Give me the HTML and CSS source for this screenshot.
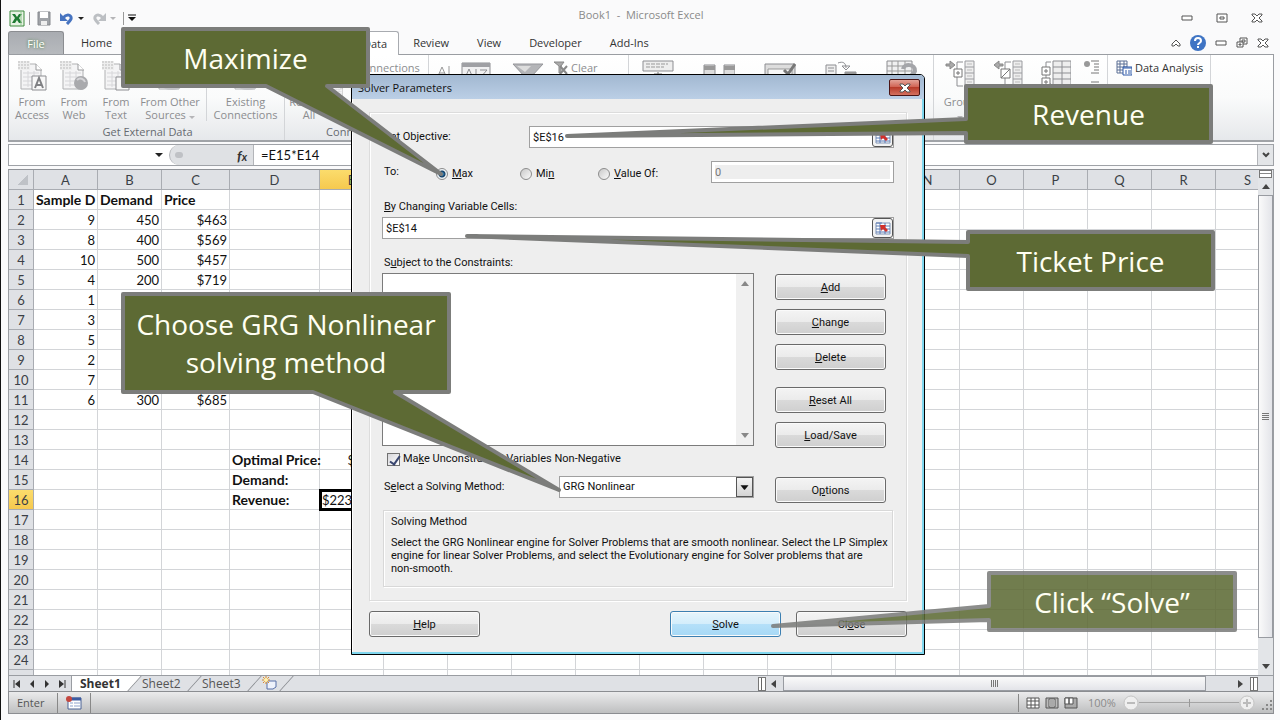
FILE: index.html
```html
<!DOCTYPE html>
<html lang="en">
<head>
  <meta charset="UTF-8" />
  <meta name="viewport" content="width=device-width, initial-scale=1.0"/>
  <title>Book1 - Microsoft Excel</title>
  <link rel="stylesheet" href="styles.css">
</head>
<body>

<svg class="defs" width="0" height="0" aria-hidden="true">
  <symbol id="page" viewBox="0 0 30 32">
    <path d="M4 4h15l5 5v20H4z" fill="#f4f4f5" stroke="#b0b1b3"/>
    <path d="M19 4v6h6" fill="#fff" stroke="#9a9b9d"/>
    <path d="M6 13h16M6 17h16M6 21h16M6 25h16M11 11v16M17 11v16" stroke="#d6d6d9"/>
    <path d="M1 1h12v9H1z" fill="#eee"/>
    <path d="M1 2h12M1 5h12M1 8h12" stroke="#bbb" stroke-dasharray="2 1"/>
  </symbol>
  <symbol id="outline" viewBox="0 0 30 32">
    <path d="M20 1h9v30h-9z" fill="#eee" stroke="#9b9ca0"/>
    <path d="M20 7h9M20 13h9M20 19h9M20 25h9" stroke="#9b9ca0"/>
    <path d="M22 4h5M22 10h5M22 16h5M22 22h5" stroke="#bbb"/>
    <path d="M18 2h-6v24h6" fill="none" stroke="#8d8e92"/>
  </symbol>
  <symbol id="picker" viewBox="0 0 16 14">
    <path d="M1 2h14v11H1z" fill="#fff" stroke="#7f93b5"/>
    <path d="M1 2h6M1 5h14M1 8h14M1 11h14M5 2v11M10 2v11" stroke="#5b7bb4"/>
    <path d="M5 4l6 0-1 2 3 3-2 2-3-3-2 2z" fill="#d1302a"/>
  </symbol>
  <symbol id="cross" viewBox="0 0 12 10">
    <path d="M1 1h3l2 2 2-2h3v1L8 5l3 3v1H8L6 7 4 9H1V8l3-3-3-3z" fill="#fff" stroke="#555"/>
  </symbol>
</svg>

<div class="window">
  <header class="titlebar">
    <div class="quick">
      <svg width="16" height="17" viewBox="0 0 16 17"><path d="M1 1h14v15H1z" fill="#e7f2e4" stroke="#3c8a3c"/><path d="M3 4h3l2 3 2-3h3l-3 4 3 5h-3l-2-3-2 3H3l3-5z" fill="#1f7b33"/><path d="M12 2v13" stroke="#8fc48d"/></svg>
      <i class="bar"></i>
      <svg class="save" width="14" height="15" viewBox="0 0 14 15"><path d="M1 1h12v13H1z" fill="#a0a3a8" stroke="#85888d"/><path d="M3 1h8v6H3z" fill="#fff"/><path d="M4 10h6v4H4z" fill="#eee"/></svg>
      <svg class="undo" width="14" height="14" viewBox="0 0 14 14"><path d="M3 7c4-5 9-3 8 1-1 2-2 3-4 5" fill="none" stroke="#4673c0" stroke-width="3"/><path d="M0 2v8h8z" fill="#4673c0"/></svg>
      <i class="caret"></i>
      <svg class="redo" width="14" height="14" viewBox="0 0 14 14"><path d="M11 7C7 2 2 4 3 8c1 2 2 3 4 5" fill="none" stroke="#bcbfc3" stroke-width="3"/><path d="M14 2v8H6z" fill="#bcbfc3"/></svg>
      <i class="caret pale"></i>
      <i class="bar"></i>
      <svg class="more" width="8" height="8" viewBox="0 0 8 8"><path d="M0 1h8" stroke="#111"/><path d="M0 3h8L4 7z" fill="#111"/></svg>
    </div>
    <h1>Book1&nbsp; -&nbsp; Microsoft Excel</h1>
    <div class="winbuttons">
      <button aria-label="Minimize"><svg width="12" height="6" viewBox="0 0 12 6"><path d="M1 1h10v4H1z" fill="#fff" stroke="#555"/></svg></button>
      <button aria-label="Restore"><svg width="12" height="10" viewBox="0 0 12 10"><path d="M1 1h10v8H1zM4 4h4v2H4z" fill="#fff" stroke="#555"/></svg></button>
      <button aria-label="Close"><svg width="12" height="10"><use href="#cross"/></svg></button>
    </div>
  </header>

  <nav class="tabs">
    <a class="file" href="#">File</a>
    <a href="#">Home</a>
    <a href="#">Insert</a>
    <a href="#">Page Layout</a>
    <a href="#">Formulas</a>
    <a class="current" href="#">Data</a>
    <a href="#">Review</a>
    <a href="#">View</a>
    <a href="#">Developer</a>
    <a href="#">Add-Ins</a>
    <div class="docbuttons">
      <button aria-label="Hide ribbon"><svg width="10" height="8" viewBox="0 0 10 8"><path d="M1 5l4-4 4 4v2H7L5 5 3 7H1z" fill="#fff" stroke="#555"/></svg></button>
      <button aria-label="Help"><svg width="16" height="16" viewBox="0 0 16 16"><circle cx="8" cy="8" r="8" fill="#3f74c4"/><path d="M5 6c0-4 6-4 6 0 0 2-3 2-3 4M8 11v2" fill="none" stroke="#fff" stroke-width="2"/></svg></button>
      <button aria-label="Minimize book"><svg width="12" height="6" viewBox="0 0 12 6"><path d="M1 1h10v4H1z" fill="#fff" stroke="#555"/></svg></button>
      <button aria-label="Restore book"><svg width="12" height="12" viewBox="0 0 12 12"><path d="M4 1h7v6H4z" fill="#fff" stroke="#555"/><path d="M6 3h3v2H6z" fill="none" stroke="#555"/><path d="M1 5h6v5H1zM3 7h2v1H3z" fill="#fff" stroke="#555"/></svg></button>
      <button aria-label="Close book"><svg width="12" height="10"><use href="#cross"/></svg></button>
    </div>
  </nav>

  <section class="ribbon">
    <div class="group external">
      <div class="tools">
        <button class="tool"><svg width="30" height="32" viewBox="0 0 30 32"><use href="#page"/><path d="M15 16h14v14H15z" fill="#f8f8f8" stroke="#8d8e92"/><path d="M18 28l4-10 4 10M19 25h6" fill="none" stroke="#808184" stroke-width="2"/></svg>From<br>Access</button>
        <button class="tool"><svg width="30" height="32" viewBox="0 0 30 32"><use href="#page"/><circle cx="22" cy="23" r="7" fill="#a9aaad"/><path d="M18 20c3-3 7-1 8 2" fill="none" stroke="#d5d5d8" stroke-width="2"/></svg>From<br>Web</button>
        <button class="tool"><svg width="30" height="32" viewBox="0 0 30 32"><use href="#page"/><path d="M15 17h13v13H15z" fill="#f8f8f8" stroke="#8d8e92"/></svg>From<br>Text</button>
        <button class="tool wide"><svg width="30" height="32" viewBox="0 0 30 32"><use href="#page"/><ellipse cx="17" cy="26" rx="10" ry="4" fill="#c4c5c8"/></svg>From Other<br>Sources <i class="caret pale"></i></button>
        <button class="tool existing"><svg width="30" height="32" viewBox="0 0 30 32"><use href="#page"/><ellipse cx="17" cy="26" rx="10" ry="4" fill="#c4c5c8"/></svg>Existing<br>Connections</button>
      </div>
      <h2>Get External Data</h2>
    </div>
    <div class="group connections">
      <div class="tools">
        <button class="tool"><svg width="30" height="32" viewBox="0 0 30 32"><use href="#page"/></svg>Refresh<br>All</button>
        <div class="stack">
          <button class="line"><svg width="16" height="16" viewBox="0 0 30 32"><use href="#page"/></svg>Connections</button>
          <button class="line" aria-label="Properties"><svg width="16" height="16" viewBox="0 0 30 32"><use href="#page"/></svg></button>
          <button class="line" aria-label="Edit links"><svg width="16" height="16" viewBox="0 0 30 32"><use href="#page"/></svg></button>
        </div>
      </div>
      <h2>Connections</h2>
    </div>
    <div class="group sort">
      <div class="tools">
        <svg width="15" height="32" viewBox="0 0 15 32"><path d="M1 16l4-9 4 9M2 13h6M12 6v20" fill="none" stroke="#999"/></svg>
        <svg width="30" height="32" viewBox="0 0 30 32"><path d="M1 3h28v25H1z" fill="#f0f0f1" stroke="#8d8e92"/><path d="M1 3h28v4H1z" fill="#9fa0a4"/><path d="M15 9v18M4 18l4-9 4 9M19 10h7l-7 8" fill="none" stroke="#8d8e92"/></svg>
        <svg class="funnel" width="32" height="32" viewBox="0 0 32 32"><path d="M1 4h30L19 17v12h-6V17z" fill="#b4b5b8" stroke="#96979b"/><path d="M5 6h14l-6 6z" fill="#ddd"/></svg>
        <button class="line"><svg width="15" height="14" viewBox="0 0 15 14"><path d="M1 1h10L8 5v7H6V5z" fill="#aaa" stroke="#888"/><path d="M7 5l7 8M14 5l-7 8" stroke="#888" stroke-width="2"/></svg>Clear</button>
      </div>
    </div>
    <div class="group datatools">
      <div class="tools">
        <svg width="32" height="32" viewBox="0 0 32 32"><path d="M1 1h30v10H1z" fill="#eee" stroke="#8d8e92"/><path d="M4 4h22M4 7h18" stroke="#999" stroke-dasharray="4 1"/><path d="M16 12v6M12 14h8l-4 5z" fill="#777" stroke="#777"/></svg>
        <svg width="32" height="32" viewBox="0 0 32 32"><path d="M1 5h11v25H1zM21 5h11v25H21z" fill="#ddd" stroke="#8d8e92"/><path d="M1 7h11M1 9h11M21 7h11M21 9h11" stroke="#999" stroke-width="2"/></svg>
        <svg width="32" height="32" viewBox="0 0 32 32"><path d="M1 4h30v22H1z" fill="#ddd" stroke="#8d8e92"/><path d="M4 9h24v9H4z" fill="#f7f7f7" stroke="#999"/><path d="M20 10l4 4 7-10" fill="none" stroke="#777" stroke-width="3"/></svg>
        <svg width="32" height="32" viewBox="0 0 32 32"><path d="M1 5h10v10H1zM20 12h11v9H20z" fill="#eee" stroke="#8d8e92"/><path d="M3 8h6M3 11h6M13 3c5-2 8 0 8 5M17 6h8l-4 4z" fill="none" stroke="#8d8e92"/><path d="M20 12h11v3H20z" fill="#999"/></svg>
        <svg width="32" height="32" viewBox="0 0 32 32"><path d="M1 1h25v24H1z" fill="#f0f0f1" stroke="#8d8e92"/><path d="M1 6h25M1 11h25M6 1v24M12 1v24M19 1v24" stroke="#999"/><path d="M17 9c1-6 13-5 12 2-1 3-4 3-5 7" fill="none" stroke="#a4a5a9" stroke-width="4"/></svg>
      </div>
    </div>
    <div class="group outline">
      <div class="tools">
        <button class="tool"><svg width="30" height="32" viewBox="0 0 30 32"><use href="#outline"/><path d="M1 4h4V1l5 4-5 4V6H1z" fill="#aaa" stroke="#888"/><path d="M9 9h8v8H9zM13 11v4M11 13h4" fill="#fff" stroke="#777"/></svg>Group<br><i class="caret pale"></i></button>
        <button class="tool"><svg width="30" height="32" viewBox="0 0 30 32"><use href="#outline"/><path d="M10 4H6V1L1 5l5 4V6h4z" fill="#aaa" stroke="#888"/><path d="M8 9h9v9H8zM8 18l9-9" fill="#fff" stroke="#777"/></svg>Ungroup<br><i class="caret pale"></i></button>
        <button class="tool"><svg width="30" height="32" viewBox="0 0 30 32"><path d="M12 1h18v30H12zM21 1v30M12 7h18M12 13h18M12 19h18" fill="#eee" stroke="#8d8e92"/><path d="M10 2H5v22h5" fill="none" stroke="#8d8e92"/><path d="M1 7h8v8H1zM5 9v4M3 11h4M1 18h8v8H1zM5 20v4M3 22h4" fill="#fff" stroke="#777"/></svg>Subtotal</button>
        <div class="stack">
          <svg width="16" height="14" viewBox="0 0 16 14"><circle cx="4" cy="4" r="3" fill="#999"/><path d="M8 1h8M11 4h5M11 7h5M11 10h5M8 13h8" stroke="#777"/></svg>
          <svg width="16" height="14" viewBox="0 0 16 14"><path d="M8 1h8M11 4h5M11 7h5" stroke="#777"/></svg>
        </div>
      </div>
      <h2>Outline</h2>
    </div>
    <div class="group analysis">
      <div class="tools">
        <div class="stack">
          <button class="line live"><svg width="16" height="16" viewBox="0 0 16 16"><path d="M1 1h10v12H1zM1 4h10M1 7h10M1 10h10M4 1v12M8 1v12" fill="#fff" stroke="#5a6f94"/><path d="M7 7h9v8H7z" fill="#fff" stroke="#2c58a8"/><path d="M7 8h9M9 11h2M12 11h3M9 13h2M12 13h3" stroke="#2c58a8"/></svg>Data Analysis</button>
          <button class="line live"><svg width="16" height="16" viewBox="0 0 16 16"><circle cx="5" cy="5" r="4" fill="#5a76b8"/></svg>Solver</button>
        </div>
      </div>
      <h2>Analysis</h2>
    </div>
  </section>

  <div class="formulabar">
    <div class="namebox"><input type="text" aria-label="Name box"><i class="caret dark"></i></div>
    <div class="fx"><i class="knob"></i><em>f<small>x</small></em></div>
    <input class="formula" type="text" aria-label="Formula" value="=E15*E14">
    <button class="expand" aria-label="Expand formula bar"><svg width="8" height="6" viewBox="0 0 8 6"><path d="M1 1l3 3 3-3" fill="none" stroke="#444" stroke-width="2"/></svg></button>
  </div>

  <main class="sheet">
    <div class="cells">
      <table>
        <colgroup id="cols"></colgroup>
        <thead id="colHeads"></thead>
        <tbody id="rows"></tbody>
      </table>
    </div>
    <div class="vscroll">
      <i class="splitter"></i>
      <i class="arrow up"></i>
      <div class="vthumb"><i></i><i></i><i></i><i></i></div>
      <i class="arrow down"></i>
    </div>
  </main>

  <div class="sheetbar">
    <div class="sheetnav">
      <svg width="8" height="8" viewBox="0 0 8 8"><path d="M1 0v8" stroke="#333"/><path d="M7 0v8L2 4z" fill="#333"/></svg>
      <svg width="8" height="8" viewBox="0 0 8 8"><path d="M6 0v8L2 4z" fill="#333"/></svg>
      <svg width="8" height="8" viewBox="0 0 8 8"><path d="M2 0v8l4-4z" fill="#333"/></svg>
      <svg width="8" height="8" viewBox="0 0 8 8"><path d="M7 0v8" stroke="#333"/><path d="M1 0v8l5-4z" fill="#333"/></svg>
    </div>
    <a class="sheettab active" href="#">Sheet1</a>
    <a class="sheettab" href="#">Sheet2</a>
    <a class="sheettab" href="#">Sheet3</a>
    <a class="sheettab new" href="#" aria-label="Insert worksheet"><svg width="16" height="14" viewBox="0 0 16 14"><path d="M5 5h9v6l-3 2H5z" fill="#eef2fb" stroke="#5870a8"/><path d="M4 0v8M0 4h8M1 1l6 6M7 1L1 7" stroke="#d98a2b"/><circle cx="4" cy="4" r="2" fill="#fff3b0"/></svg></a>
    <div class="hscroll">
      <i class="hsplit"></i>
      <i class="arrow left"></i>
      <div class="hthumb"><i></i><i></i><i></i><i></i></div>
      <i class="arrow right"></i>
      <i class="hsplit"></i>
    </div>
  </div>

  <footer class="status">
    <span class="mode">Enter</span>
    <div class="macro"><svg width="16" height="14" viewBox="0 0 16 14"><path d="M2 2h13v11H2z" fill="#fff" stroke="#4b6295"/><path d="M2 3h13" stroke="#3c5aa0" stroke-width="3"/><path d="M4 7h3M8 7h6M4 10h3M8 10h6" stroke="#8fa3cc"/><circle cx="3" cy="3" r="3" fill="#c4473f"/></svg></div>
    <div class="views">
      <svg width="14" height="12" viewBox="0 0 14 12"><path d="M1 1h12v10H1zM1 4h12M1 8h12M5 1v10M9 1v10" fill="#fff" stroke="#555"/></svg>
      <svg width="14" height="12" viewBox="0 0 14 12"><path d="M1 1h12v10H1z" fill="#bbb" stroke="#555"/><path d="M4 2h6v8H4zM5 4h4M5 6h4M5 8h4" fill="#fff" stroke="#555"/></svg>
      <svg width="14" height="12" viewBox="0 0 14 12"><path d="M1 1h12v10H1z" fill="#aaa" stroke="#555"/><path d="M1 1h4v6H1zM5 1h4v6H5z" fill="#fff" stroke="#555"/></svg>
    </div>
    <span class="percent">100%</span>
    <div class="zoom">
      <button aria-label="Zoom out"><svg width="16" height="16" viewBox="0 0 16 16"><circle cx="8" cy="8" r="7" fill="#efefef" stroke="#c4c4c4"/><path d="M4 8h8" stroke="#bbb" stroke-width="2"/></svg></button>
      <input type="range" aria-label="Zoom" min="0" max="100" value="50">
      <button aria-label="Zoom in"><svg width="16" height="16" viewBox="0 0 16 16"><circle cx="8" cy="8" r="7" fill="#efefef" stroke="#c4c4c4"/><path d="M4 8h8M8 4v8" stroke="#bbb" stroke-width="2"/></svg></button>
    </div>
    <svg class="grip" width="12" height="12" viewBox="0 0 12 12"><path d="M9 1h2M5 5h2M9 5h2M1 9h2M5 9h2M9 9h2" stroke="#888" stroke-width="2"/></svg>
  </footer>
</div>

<form class="dialog" onsubmit="return false">
  <div class="dialog-title">
    <h2>Solver Parameters</h2>
    <button class="close" type="button" aria-label="Close dialog"><svg width="12" height="10"><use href="#cross"/></svg></button>
  </div>
  <div class="panel">
    <div class="row">
      <label class="lead" for="objective">Se<u>t</u> Objective:</label>
      <div class="ref"><input id="objective" type="text" value="$E$16"><button type="button" aria-label="Pick objective"><svg width="16" height="14"><use href="#picker"/></svg></button></div>
    </div>
    <div class="row to">
      <span class="tolabel">To:</span>
      <label class="r-max"><input type="radio" name="goal" checked><span><u>M</u>ax</span></label>
      <label class="r-min"><input type="radio" name="goal"><span>Mi<u>n</u></span></label>
      <label class="r-value"><input type="radio" name="goal"><span><u>V</u>alue Of:</span></label>
      <input class="target" type="text" value="0" aria-label="Target value" disabled>
    </div>
    <label class="above" for="variables"><u>B</u>y Changing Variable Cells:</label>
    <div class="ref"><input id="variables" type="text" value="$E$14"><button type="button" aria-label="Pick variable cells"><svg width="16" height="14"><use href="#picker"/></svg></button></div>
    <label class="above" for="constraints">S<u>u</u>bject to the Constraints:</label>
    <div class="lower">
      <div class="setup">
        <div class="listbox">
          <textarea id="constraints"></textarea>
          <div class="listscroll"><i class="arrow up"></i><i class="arrow down"></i></div>
        </div>
        <label class="check"><input type="checkbox" checked><span>Ma<u>k</u>e Unconstrained Variables Non-Negative</span></label>
        <div class="row method">
          <label for="method">S<u>e</u>lect a Solving Method:</label>
          <select id="method"><option>GRG Nonlinear</option><option>Simplex LP</option><option>Evolutionary</option></select>
          <svg class="drop" width="17" height="20" viewBox="0 0 17 20"><path d="M4 8h9l-4 5h-1z" fill="#111"/></svg>
        </div>
      </div>
      <div class="side">
        <button class="btn" type="button"><u>A</u>dd</button>
        <button class="btn" type="button"><u>C</u>hange</button>
        <button class="btn" type="button"><u>D</u>elete</button>
        <button class="btn reset" type="button"><u>R</u>eset All</button>
        <button class="btn" type="button"><u>L</u>oad/Save</button>
        <button class="btn options" type="button">O<u>p</u>tions</button>
      </div>
    </div>
    <div class="about">
      <h3>Solving Method</h3>
      <p>Select the GRG Nonlinear engine for Solver Problems that are smooth nonlinear. Select the LP Simplex<br>engine for linear Solver Problems, and select the Evolutionary engine for Solver problems that are<br>non-smooth.</p>
    </div>
  </div>
  <div class="actions">
    <button class="btn help" type="button"><u>H</u>elp</button>
    <button class="btn solve" type="submit"><u>S</u>olve</button>
    <button class="btn" type="button">Cl<u>o</u>se</button>
  </div>
</form>

<!-- callouts, each tail is drawn from its box's own top left corner -->
<div class="callout maximize">
  <svg width="245" height="57"><path d="M0 0H245V57H204L318 145L143 57H0z"/></svg>
  <p>Maximize</p>
</div>
<div class="callout revenue">
  <svg width="245" height="56"><path d="M0 0H245V56H0V47L-399 50L0 33z"/></svg>
  <p>Revenue</p>
</div>
<div class="callout ticket">
  <svg width="245" height="57"><path d="M0 0H245V57H0V24L-501 4L0 10z"/></svg>
  <p>Ticket Price</p>
</div>
<div class="callout grg">
  <svg width="326" height="98"><path d="M0 0H326V98H272L436 196L190 98H0z"/></svg>
  <p>Choose GRG Nonlinear solving method</p>
</div>
<div class="callout click">
  <svg width="246" height="57"><path d="M0 0H246V57H0V47L-216 53L0 33z"/></svg>
  <p>Click “Solve”</p>
</div>

<script src="script.js"></script>
</body>
</html>
```
FILE: styles.css
```css
* {
  box-sizing: border-box;
}
body {
  margin: 0;
  font-family: "Open Sans", "Noto Sans", sans-serif;
  font-size: 11px;
  color: #333;
  background: #fafafb;
  overflow: hidden;
}
h1, h2, h3, p {
  margin: 0;
  font-weight: normal;
}
a {
  color: inherit;
  text-decoration: none;
}
button {
  font: inherit;
  color: inherit;
  background: none;
  border: none;
  padding: 0;
}
input, select, textarea {
  font: inherit;
  color: #111;
  margin: 0;
  border: none;
  padding: 0;
  min-width: 0;
}
svg {
  display: block;
  flex: none;
}
.defs {
  position: absolute;
}
.window {
  height: 100vh;
  display: flex;
  flex-direction: column;
  padding: 0 6px 6px 7px;
  border-left: 1px solid #111;
}

/* title bar */
.titlebar {
  display: grid;
  grid-template-columns: 1fr auto 1fr;
  align-items: center;
  height: 31px;
  flex: none;
}
.titlebar h1 {
  font-size: 11px;
  padding-bottom: 2px;
  color: #8a8a8a;
}
.quick {
  display: flex;
  align-items: center;
  padding: 5px 0 0 1px;
}
.bar {
  width: 1px;
  height: 13px;
  background: #999;
  margin-left: 4px;
}
.save { margin-left: 7px; }
.undo { margin-left: 9px; }
.redo { margin-left: 8px; }
.more { margin-left: 4px; }
.quick .caret { margin-left: 4px; }
.quick .pale + .bar { margin-left: 7px; }
.caret {
  display: inline-block;
  border: 3px solid transparent;
  border-top-color: #222;
  border-bottom: none;
}
.caret.pale { border-top-color: #b5b5b8; }
.caret.dark { border-width: 4px 4px 0; }
.winbuttons {
  display: flex;
  justify-content: flex-end;
  align-items: center;
  gap: 23px;
  padding: 4px 11px 0 0;
}
.docbuttons {
  display: flex;
  align-items: center;
  gap: 9px;
  margin-left: auto;
  padding-right: 5px;
}

/* ribbon tabs */
.tabs {
  display: flex;
  height: 23px;
  flex: none;
  line-height: 23px;
}
.tabs a {
  padding: 0 14px;
}
.tabs a.file {
  width: 56px;
  margin-right: 3px;
  text-align: center;
  color: #fff;
  background: linear-gradient(#a9acb1, #b7babe);
  border: 1px solid #8b8d91;
  border-bottom: none;
  border-radius: 3px 3px 0 0;
  text-shadow: 0 0 3px #3a7a32;
  padding: 0;
}
.tabs a.current {
  padding: 0 11px 0 12px;
  background: #fff;
  border: 1px solid #a8abb0;
  border-bottom: none;
  border-radius: 3px 3px 0 0;
  margin-bottom: -1px;
  position: relative;
}

/* ribbon */
.ribbon {
  display: flex;
  height: 88px;
  flex: none;
  border: 1px solid #9a9da2;
  border-bottom: 2px solid #a0a3a7;
  background: linear-gradient(#fff, #fafbfb 50%, #e6e8eb);
  color: #8c8d90;
}
.group {
  display: flex;
  flex-direction: column;
  flex: none;
  border-right: 1px solid #d3d5d8;
  padding-top: 5px;
  overflow: hidden;
}
.group h2 {
  font-size: 11px;
  line-height: 16px;
  margin-top: auto;
  text-align: center;
  color: #666a70;
}
.tools {
  display: flex;
  align-items: flex-start;
}
.tool {
  width: 42px;
  line-height: 13px;
  display: block;
  white-space: nowrap;
  text-align: center;
}
.tool svg {
  margin: 0 auto 3px;
}
.external { width: 276px; padding-left: 2px; }
.external .wide { width: 66px; }
.external .existing {
  width: 78px;
  margin-left: 3px;
  border-left: 1px solid #d3d5d8;
}
.connections { width: 144px; padding-left: 3px; }
.stack {
  display: flex;
  flex-direction: column;
  gap: 7px;
}
.line {
  display: flex;
  align-items: center;
  gap: 3px;
  line-height: 16px;
  white-space: nowrap;
}
.connections .line { gap: 10px; }
.line.live { color: #333; }
.sort { width: 200px; }
.sort .tools {
  padding-left: 8px;
  gap: 9px;
}
.sort .funnel { margin-left: 12px; }
.datatools { width: 305px; }
.datatools .tools {
  padding-left: 13px;
  gap: 29px;
}
.outline { width: 174px; }
.outline .tools { padding-left: 5px; gap: 6px; }
.analysis { width: 103px; padding-left: 8px; }

/* formula bar */
.formulabar {
  display: flex;
  height: 22px;
  flex: none;
  margin: 2px 0 3px;
  border: 1px solid #9fa2a7;
  background: #fff;
}
.namebox {
  display: flex;
  align-items: center;
  width: 160px;
  padding-right: 6px;
}
.namebox input {
  flex: 1;
}
.fx {
  display: flex;
  align-items: center;
  justify-content: space-between;
  width: 85px;
  padding: 0 6px 0 5px;
  background: #dfe1e4;
  border: 1px solid #b3b5b9;
  border-width: 0 1px;
  border-radius: 10px 0 0 10px;
  font-family: "Lato", sans-serif;
  font-size: 14px;
  font-weight: bold;
}
.fx small { font-size: 11px; }
.knob {
  width: 8px;
  height: 6px;
  border-radius: 4px;
  background: #bfc1c5;
}
.formula {
  flex: 1;
  padding-left: 7px;
  outline: none;
  font-family: "Lato", sans-serif;
  font-size: 13px;
}
.expand {
  width: 16px;
  display: flex;
  align-items: center;
  justify-content: center;
  background: #e3e5e8;
  border-left: 1px solid #b3b5b9;
}

/* sheet */
.sheet {
  display: flex;
  flex: 1;
  min-height: 0;
  border-top: 1px solid #8f9297;
  border-left: 1px solid #9a9da2;
  background: #fff;
}
.cells {
  flex: 1;
  min-width: 0;
  overflow: hidden;
}
table {
  width: 1271px;
  table-layout: fixed;
  border-collapse: separate;
  border-spacing: 0;
  font-family: "Lato", sans-serif;
  font-size: 13px;
  line-height: 18px;
  color: #111;
}
.c-head { width: 25px; }
.c-std { width: 64px; }
.c-c { width: 68px; }
.c-d { width: 90px; }
th, td {
  height: 20px;
  padding: 1px 2px 0;
  border-right: 1px solid #d3d5d8;
  border-bottom: 1px solid #d3d5d8;
  overflow: hidden;
  white-space: nowrap;
}
th {
  padding: 1px 0 0;
  font-weight: normal;
  text-align: center;
  color: #3b3f46;
  background: #dfe1e5;
  border-color: #a9acb2;
}
thead th:first-child {
  background: linear-gradient(135deg, transparent 62%, #bfc2c7 62%) 3px 3px / 16px 12px no-repeat #dfe1e5;
}
th.hot {
  background: linear-gradient(#fbdc6c, #f6c94f);
}
td.num { text-align: right; }
td.bold {
  font-size: 14px;
  font-weight: bold;
  overflow: visible;
}
td.selected {
  outline: 3px solid #000;
  outline-offset: -2px;
}

/* scroll bars */
.vscroll {
  width: 16px;
  display: flex;
  flex-direction: column;
  align-items: center;
  background: #e3e5e8;
  border-right: 1px solid #9a9da2;
}
.splitter {
  width: 13px;
  height: 8px;
  border: 1px solid #777;
  background: linear-gradient(#fff 2px, #888 2px, #888 3px, #fff 3px);
}
.arrow {
  border: 4px solid transparent;
}
.arrow.up { border-top: none; border-bottom: 5px solid #444; }
.arrow.down { border-bottom: none; border-top: 5px solid #444; }
.arrow.left { border-left: none; border-right: 5px solid #444; }
.arrow.right { border-right: none; border-left: 5px solid #444; }
.vscroll .up { margin: 6px 0; }
.vscroll .down { margin: 26px 0 6px; }
.vthumb {
  flex: 1;
  width: 15px;
  display: flex;
  flex-direction: column;
  align-items: center;
  justify-content: center;
  gap: 1px;
  border: 1px solid #989ba1;
  background: linear-gradient(90deg, #fafafa, #e3e4e9);
}
.vthumb i {
  width: 7px;
  height: 1px;
  background: #777;
}

/* sheet tabs */
.sheetbar {
  display: flex;
  align-items: stretch;
  height: 16px;
  flex: none;
  background: #dfe1e5;
  border: 1px solid #9a9da2;
  border-width: 1px 1px 0;
  font-size: 12px;
  line-height: 15px;
}
.sheetnav {
  display: flex;
  align-items: center;
  gap: 7px;
  width: 63px;
  padding-left: 4px;
  border-right: 1px solid #9a9da2;
}
.sheettab {
  position: relative;
  z-index: 0;
  width: 60px;
  padding-left: 9px;
  color: #555;
}
.sheettab::after {
  content: "";
  position: absolute;
  z-index: -1;
  inset: 0 -2px 0 8px;
  border-right: 1px solid #85888d;
  transform: skewX(-42deg);
}
.sheettab.active {
  width: 61px;
  padding-left: 8px;
  font-weight: bold;
  color: #333;
  background: linear-gradient(90deg, #fff 48px, transparent 48px);
}
.sheettab.active::after { background: #fff; }
.sheettab.new {
  width: 32px;
  padding-left: 9px;
}
.hscroll {
  display: flex;
  align-items: center;
  width: 515px;
  margin-left: auto;
  padding-right: 15px;
}
.hsplit {
  width: 8px;
  height: 14px;
  border: 1px solid #777;
  background: linear-gradient(90deg, #fff 2px, #666 2px, #666 3px, #fff 3px);
}
.hscroll .left { margin: 0 7px 0 5px; }
.hscroll .right { margin: 0 7px 0 32px; }
.hthumb {
  flex: 1;
  height: 15px;
  display: flex;
  align-items: center;
  justify-content: center;
  gap: 1px;
  border: 1px solid #989ba1;
  background: linear-gradient(#fafafa, #e3e4e9);
}
.hthumb i {
  width: 1px;
  height: 7px;
  background: #777;
}

/* status bar */
.status {
  display: flex;
  align-items: center;
  height: 23px;
  flex: none;
  border: 1px solid #8b8d91;
  background: linear-gradient(#ebebec, #bebfc0);
  color: #555;
  line-height: 20px;
}
.mode {
  width: 49px;
  padding-left: 8px;
  border-right: 1px solid #888;
}
.macro {
  padding: 3px 8px;
  border-right: 1px solid #888;
}
.views {
  display: flex;
  gap: 5px;
  margin-left: auto;
  padding-left: 7px;
  border-left: 1px solid #888;
  height: 18px;
  align-items: center;
}
.percent {
  width: 35px;
  margin-left: 10px;
  color: #8b8b8b;
}
.zoom {
  display: flex;
  align-items: center;
  width: 132px;
}
.zoom input {
  appearance: none;
  flex: 1;
  height: 8px;
  background: linear-gradient(#a5a5a5, #a5a5a5) center / 100% 1px no-repeat;
}
.zoom input::-webkit-slider-thumb {
  appearance: none;
  width: 1px;
  height: 8px;
  background: #999;
}
.grip { margin: 6px 0 0 6px; }

/* solver dialog */
.dialog {
  position: absolute;
  left: 351px;
  top: 74px;
  width: 574px;
  border: 1px solid #000;
  border-radius: 5px 5px 0 0;
  background: #eee;
  box-shadow: inset -2px -2px #7fd6ee, inset 1px 0 #fff;
  font-family: "Roboto", sans-serif;
  font-size: 11px;
  line-height: 16px;
  color: #111;
}
.dialog-title {
  display: flex;
  justify-content: space-between;
  height: 24px;
  padding: 0 4px 0 6px;
  background: linear-gradient(#a2b8d1, #bbcfe6);
  border-radius: 4px 4px 0 0;
}
.dialog-title h2 {
  font-family: "Open Sans", sans-serif;
  font-size: 11px;
  line-height: 26px;
}
.close {
  display: flex;
  align-items: center;
  justify-content: center;
  width: 31px;
  height: 17px;
  margin-top: 4px;
  border: 1px solid #4b1515;
  border-radius: 2px;
  background: linear-gradient(#e3a398, #cf5e4e 50%, #b83c2b 50%, #d4715f);
}
.panel {
  margin: 13px 17px 10px;
  padding: 13px 12px;
  border: 1px solid #dcdcdc;
  box-shadow: inset 1px 1px #fff, 1px 1px #fff;
}
.row {
  display: flex;
  align-items: center;
}
.lead {
  width: 147px;
  padding-left: 2px;
}
.ref {
  display: flex;
  flex: 1;
  height: 22px;
  border: 1px solid #a0a0a0;
  background: #fff;
}
.ref input {
  flex: 1;
  padding: 1px 0 0 3px;
}
.ref button {
  display: flex;
  align-items: center;
  justify-content: center;
  width: 21px;
  border: 1px solid #555;
  border-radius: 3px;
  background: #f3f3f3;
}
.to {
  margin-top: 13px;
  height: 22px;
}
.to label {
  display: flex;
  align-items: center;
  gap: 4px;
  padding-top: 4px;
}
.tolabel { width: 54px; padding-left: 2px; }
.r-max { width: 84px; }
.r-min { width: 78px; }
.r-value { width: 113px; }
.to input[type="radio"] {
  appearance: none;
  width: 12px;
  height: 12px;
  border: 1px solid #8c8c8c;
  border-radius: 50%;
  background: linear-gradient(135deg, #c9c9c9, #fafafa);
}
.to input[type="radio"]:checked {
  background: radial-gradient(circle at 5px 5px, #8fd4f5 0, #1c5c8f 2px, #173e60 3px, #eef4f8 4px);
}
.target {
  flex: 1;
  height: 22px;
  padding: 0 3px;
  border: 1px solid #a0a0a0;
  outline: 3px solid #fff;
  outline-offset: -4px;
  background: #eee;
  color: #777;
}
.above {
  display: block;
  margin: 16px 0 2px 2px;
}
.lower {
  display: flex;
  gap: 21px;
}
.setup {
  flex: 1;
}
.listbox {
  display: flex;
  height: 173px;
  border: 1px solid #7b7b7b;
  background: #fff;
}
.listbox textarea {
  flex: 1;
  resize: none;
  outline: none;
}
.listscroll {
  display: flex;
  flex-direction: column;
  justify-content: space-between;
  align-items: center;
  width: 17px;
  padding: 7px 0;
  background: #f0f0f0;
}
.listscroll .up { border-bottom-color: #888; }
.listscroll .down { border-top-color: #888; }
.check {
  display: flex;
  align-items: center;
  gap: 3px;
  margin: 5px 0 9px 5px;
}
.check input {
  appearance: none;
  width: 13px;
  height: 13px;
  border: 1px solid #707070;
  background: linear-gradient(135deg, #d6d6da, #fff);
  position: relative;
}
.check input:checked::after {
  content: "";
  position: absolute;
  left: 4px;
  top: 0;
  width: 4px;
  height: 9px;
  border: solid #39466f;
  border-width: 0 2px 2px 0;
  transform: rotate(35deg);
}
.method {
  position: relative;
}
.method label {
  width: 177px;
  padding-left: 2px;
}
.method select {
  appearance: none;
  flex: 1;
  height: 22px;
  padding-left: 3px;
  border: 1px solid #a0a0a0;
  border-radius: 0;
  background: #fff;
}
.drop {
  position: absolute;
  right: 1px;
  top: 1px;
  border: 1px solid #555;
  background: linear-gradient(#f4f4f4, #d4d4d4);
  pointer-events: none;
}
.side {
  display: flex;
  flex-direction: column;
  gap: 9px;
  padding: 1px 8px 0 0;
}
.btn {
  width: 111px;
  height: 26px;
  padding-top: 1px;
  border: 1px solid #6a6a6a;
  border-radius: 3px;
  background: linear-gradient(#f4f4f4, #ebebeb 50%, #dadada 50%, #cfcfcf);
  box-shadow: inset 0 0 0 1px #fafafa;
}
.reset { margin-top: 8px; }
.options { margin-top: 20px; }
.about {
  height: 77px;
  margin: 7px 1px 0;
  padding: 3px 0 0 7px;
  border: 1px solid #d8d8d8;
  box-shadow: inset 1px 1px #fff, 1px 1px #fff;
}
.about h3 {
  font-size: 11px;
}
.about p {
  margin-top: 6px;
  line-height: 13px;
  white-space: nowrap;
}
.actions {
  display: flex;
  gap: 15px;
  padding: 0 17px 17px;
}
.help { margin-right: auto; }
.solve {
  border-color: #3c7fb1;
  background: linear-gradient(#e6f5fc, #d3edfb 50%, #b5e0f9 50%, #a6d8f5);
}

/* callouts */
.callout {
  position: absolute;
  display: flex;
  align-items: center;
  justify-content: center;
  text-align: center;
  color: #fffff2;
  font-size: 28px;
  line-height: 38px;
}
.callout svg {
  position: absolute;
  left: 0;
  top: 0;
  overflow: visible;
}
.callout path {
  fill: #5d6a34;
  stroke: #7c7d7b;
  stroke-width: 4px;
  stroke-linejoin: round;
}
.callout p {
  position: relative;
}
.maximize { left: 123px; top: 29px; width: 245px; height: 57px; }
.revenue { left: 966px; top: 86px; width: 245px; height: 56px; }
.ticket { left: 968px; top: 232px; width: 245px; height: 57px; }
.grg { left: 123px; top: 294px; width: 326px; height: 98px; }
.click { left: 989px; top: 573px; width: 246px; height: 57px; }
.click svg { opacity: 0.87; }
```
FILE: script.js
```js
const columns = "ABCDEFGHIJKLMNOPQRS".split("");
const widths = { C: "c-c", D: "c-d" };

const cells = {
  A1: "Sample D", B1: "Demand", C1: "Price",
  D14: "Optimal Price:", D15: "Demand:", D16: "Revenue:",
  E14: "$ 447", E15: "500", E16: "$223,520.0",
};

const samples = [
  [9, 450, 463], [8, 400, 569], [10, 500, 457], [4, 200, 719], [1, 50, 960],
  [3, 150, 790], [5, 250, 700], [2, 100, 850], [7, 350, 610], [6, 300, 685],
];

samples.forEach((s, i) => {
  cells["A" + (i + 2)] = s[0];
  cells["B" + (i + 2)] = s[1];
  cells["C" + (i + 2)] = "$" + s[2];
});

function renderSheet() {
  document.getElementById("cols").innerHTML = '<col class="c-head">' +
    columns.map(c => `<col class="${widths[c] || "c-std"}">`).join("");

  document.getElementById("colHeads").innerHTML = "<tr><th></th>" +
    columns.map(c => `<th${c === "E" ? ' class="hot"' : ""}>${c}</th>`).join("") + "</tr>";

  let html = "";
  for (let r = 1; r <= 25; r++) {
    html += `<tr><th${r === 16 ? ' class="hot"' : ""}>${r < 25 ? r : ""}</th>`;
    columns.forEach(c => {
      const value = cells[c + r];
      let cls = "";
      if (value !== undefined) cls = r === 1 || c === "D" ? "bold" : "num";
      if (c === "E" && r === 16) cls += " selected";
      html += `<td${cls ? ` class="${cls}"` : ""}>${value === undefined ? "" : value}</td>`;
    });
    html += "</tr>";
  }
  document.getElementById("rows").innerHTML = html;
}

renderSheet();
```
